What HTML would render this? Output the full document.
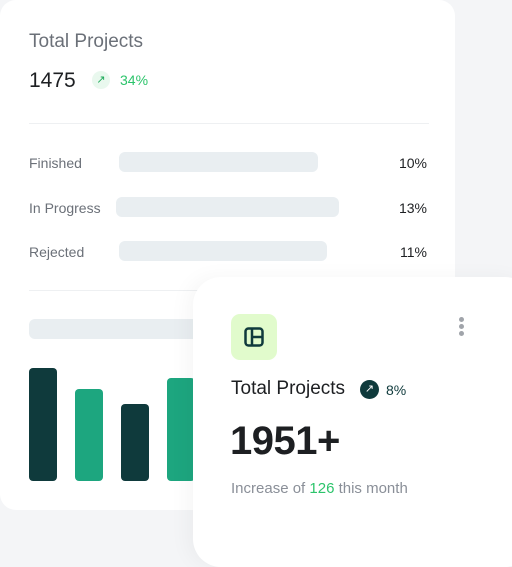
<!DOCTYPE html>
<html><head><style>
body{margin:0;width:512px;height:537px;background:#f4f5f7;position:relative;overflow:hidden;font-family:"Liberation Sans",sans-serif}
.a{position:absolute}
.back{left:0;top:0;width:455px;height:510px;background:#fff;border-radius:16px}
.lbl{font-size:14px;color:#6b7078}
.pb{background:#e9eef1;border-radius:6px;height:20px}
.pct{font-size:14px;color:#1d1f22;right:85px}
.front{left:193px;top:277px;width:340px;height:290px;background:#fff;border-radius:28px;box-shadow:-6px 0 20px rgba(0,0,0,0.04)}
</style></head><body>
<div class="a back"></div>
<div class="a" style="left:29px;top:31px;font-size:19px;color:#6b7078">Total Projects</div>
<div class="a" style="left:29px;top:69px;font-size:21px;color:#1d1f22">1475</div>
<div class="a" style="left:92px;top:71px;width:18px;height:18px;border-radius:50%;background:#e9f8ee;color:#1faa5a;font-size:11px;text-align:center;line-height:18px">↗</div>
<div class="a" style="left:120px;top:72px;font-size:14px;color:#2cc46b">34%</div>
<div class="a" style="left:29px;top:123px;width:400px;height:1px;background:#eef0f2"></div>
<div class="a lbl" style="left:29px;top:155px">Finished</div>
<div class="a pb" style="left:119px;top:152px;width:199px"></div>
<div class="a pct" style="top:155px;right:85px">10%</div>
<div class="a lbl" style="left:29px;top:200px">In Progress</div>
<div class="a pb" style="left:116px;top:197px;width:223px"></div>
<div class="a pct" style="top:200px;right:85px">13%</div>
<div class="a lbl" style="left:29px;top:244px">Rejected</div>
<div class="a pb" style="left:119px;top:241px;width:208px"></div>
<div class="a pct" style="top:244px;right:85px">11%</div>
<div class="a" style="left:29px;top:290px;width:400px;height:1px;background:#eef0f2"></div>
<div class="a pb" style="left:29px;top:319px;width:180px"></div>
<div class="a" style="left:29px;top:368px;width:28px;height:113px;background:#0f3a3c;border-radius:4px"></div>
<div class="a" style="left:75px;top:389px;width:28px;height:92px;background:#1da67f;border-radius:4px"></div>
<div class="a" style="left:121px;top:404px;width:28px;height:77px;background:#0f3a3c;border-radius:4px"></div>
<div class="a" style="left:167px;top:378px;width:28px;height:103px;background:#1da67f;border-radius:4px"></div>
<div class="a front"></div>
<div class="a" style="left:231px;top:314px;width:46px;height:46px;background:#e1fbcc;border-radius:9px"></div>
<svg class="a" style="left:244px;top:327px" width="20" height="20" viewBox="0 0 20 20"><rect x="1.5" y="1.5" width="17" height="17" rx="3" fill="none" stroke="#0f3a3c" stroke-width="2.5"/><line x1="8" y1="2" x2="8" y2="18" stroke="#0f3a3c" stroke-width="2.5"/><line x1="8" y1="10" x2="18" y2="10" stroke="#0f3a3c" stroke-width="2.5"/></svg>
<div class="a" style="left:459px;top:317px;width:5px;height:5px;border-radius:50%;background:#a0a4aa;box-shadow:0 7px 0 #a0a4aa,0 14px 0 #a0a4aa"></div>
<div class="a" style="left:231px;top:378px;font-size:19px;color:#1d1f22">Total Projects</div>
<div class="a" style="left:360px;top:380px;width:19px;height:19px;border-radius:50%;background:#0f3a3c;color:#fff;font-size:11px;text-align:center;line-height:19px">↗</div>
<div class="a" style="left:386px;top:382px;font-size:14px;color:#0f3a3c">8%</div>
<div class="a" style="left:230px;top:419px;font-size:40px;font-weight:bold;color:#1d1f22;letter-spacing:-0.5px">1951+</div>
<div class="a" style="left:231px;top:480px;font-size:15px;color:#8a8f98">Increase of <span style="color:#2cc46b">126</span> this month</div>
</body></html>
